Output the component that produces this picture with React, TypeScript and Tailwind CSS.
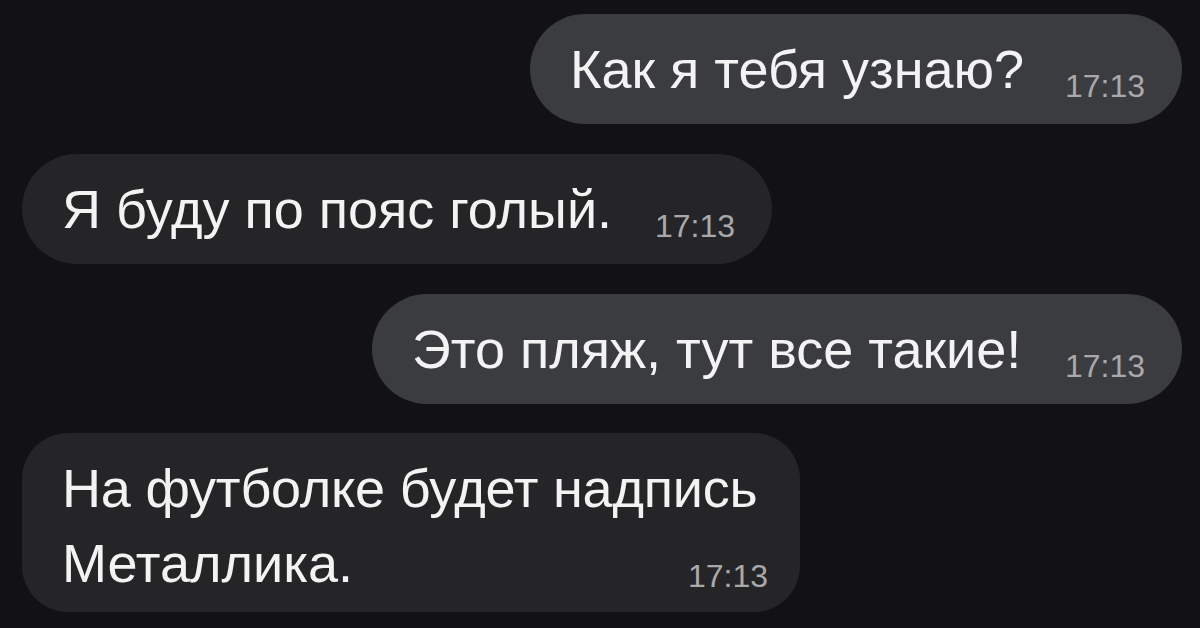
import React from 'react';

type Msg = {
  text: string;
  time: string;
  out: boolean;
  width: string;
};

const messages: Msg[] = [
  { text: 'Как я тебя узнаю?', time: '17:13', out: true, width: 'w-[652px]' },
  { text: 'Я буду по пояс голый.', time: '17:13', out: false, width: 'w-[750px]' },
  { text: 'Это пляж, тут все такие!', time: '17:13', out: true, width: 'w-[810px]' },
];

function Bubble({ text, time, out, width }: Msg) {
  return (
    <div className={out ? 'flex justify-end' : 'flex justify-start'}>
      <div
        className={
          'flex h-[110px] items-start justify-between rounded-[55px] pl-[40px] pr-[37px] ' +
          width +
          ' ' +
          (out ? 'bg-[#3b3c3f]' : 'bg-[#252527]')
        }
      >
        <span className="mt-[28px] text-[54px] leading-none whitespace-nowrap text-[#f3f3f3]">{text}</span>
        <span className="mt-[56px] text-[32px] leading-none text-[#a9a9ab]">{time}</span>
      </div>
    </div>
  );
}

export default function App() {
  return (
    <div
      className="h-[628px] w-[1200px] overflow-hidden bg-[#121214] pl-[22px] pr-[18px] pt-[14px]"
      style={{ fontFamily: '"Liberation Sans", Arial, sans-serif' }}
    >
      <div className="flex flex-col gap-[30px]">
        {messages.map((m, i) => (
          <Bubble key={i} {...m} />
        ))}
        <div className="flex justify-start -mt-[1px]">
          <div className="flex h-[179px] w-[778px] flex-col rounded-[46px] bg-[#252527] pl-[40px] pr-[32px] pt-[18px] text-[#f3f3f3]">
            <span className="text-[54px] leading-[75px] whitespace-nowrap tracking-[-0.2px]">На футболке будет надпись</span>
            <div className="flex items-start justify-between">
              <span className="text-[54px] leading-[75px] whitespace-nowrap">Металлика.</span>
              <span className="mt-[34px] text-[32px] leading-none text-[#a9a9ab]">17:13</span>
            </div>
          </div>
        </div>
      </div>
    </div>
  );
}
